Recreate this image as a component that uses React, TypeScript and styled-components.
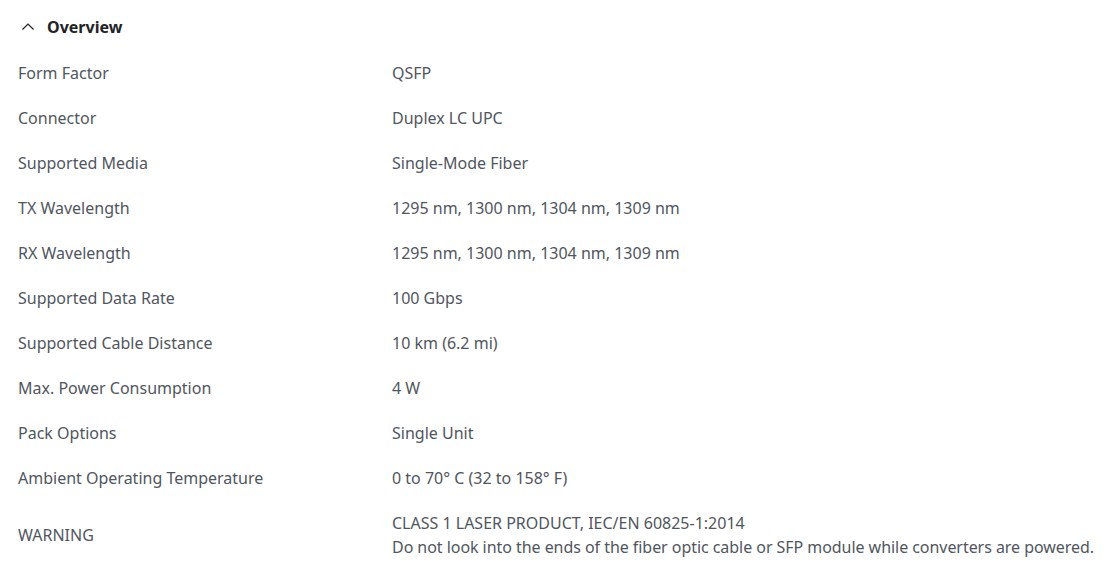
import styled, { createGlobalStyle } from "styled-components";

const GlobalStyle = createGlobalStyle`
  body {
    margin: 0;
    background: #ffffff;
    font-family: "Noto Sans", "Liberation Sans", sans-serif;
  }
`;

type Spec = {
  label: string;
  value: string[];
};

const specs: Spec[] = [
  { label: "Form Factor", value: ["QSFP"] },
  { label: "Connector", value: ["Duplex LC UPC"] },
  { label: "Supported Media", value: ["Single-Mode Fiber"] },
  { label: "TX Wavelength", value: ["1295 nm, 1300 nm, 1304 nm, 1309 nm"] },
  { label: "RX Wavelength", value: ["1295 nm, 1300 nm, 1304 nm, 1309 nm"] },
  { label: "Supported Data Rate", value: ["100 Gbps"] },
  { label: "Supported Cable Distance", value: ["10 km (6.2 mi)"] },
  { label: "Max. Power Consumption", value: ["4 W"] },
  { label: "Pack Options", value: ["Single Unit"] },
  { label: "Ambient Operating Temperature", value: ["0 to 70° C (32 to 158° F)"] },
  {
    label: "WARNING",
    value: [
      "CLASS 1 LASER PRODUCT, IEC/EN 60825-1:2014",
      "Do not look into the ends of the fiber optic cable or SFP module while converters are powered.",
    ],
  },
];

const Section = styled.section`
  padding: 0 8px 0 18px;
`;

const Header = styled.button`
  display: flex;
  align-items: center;
  gap: 12px;
  border: none;
  background: none;
  padding: 15px 0 11.5px 3px;
  font-family: inherit;
  font-size: 16px;
  font-weight: 700;
  line-height: 24px;
  color: #212327;
  cursor: pointer;
`;

const Table = styled.dl`
  margin: 0;
`;

const Row = styled.div`
  display: grid;
  grid-template-columns: 374px 1fr;
  align-items: center;
  padding: 10.5px 0;
  font-size: 16px;
  line-height: 24px;
  color: #50565e;
`;

const Label = styled.dt`
  margin: 0;
`;

const Value = styled.dd`
  margin: 0;
  white-space: nowrap;
`;

const Line = styled.div`
  &:nth-child(2) {
    letter-spacing: -0.05px;
  }
`;

function Chevron() {
  return (
    <svg width="14" height="14" viewBox="0 0 14 14" fill="none">
      <path d="M1.5 9.5 7 4l5.5 5.5" stroke="#212327" strokeWidth="1.2" />
    </svg>
  );
}

export default function App() {
  return (
    <>
      <GlobalStyle />
      <Section>
        <Header>
          <Chevron />
          Overview
        </Header>
        <Table>
          {specs.map((s) => (
            <Row key={s.label}>
              <Label>{s.label}</Label>
              <Value>
                {s.value.map((v) => (
                  <Line key={v}>{v}</Line>
                ))}
              </Value>
            </Row>
          ))}
        </Table>
      </Section>
    </>
  );
}
